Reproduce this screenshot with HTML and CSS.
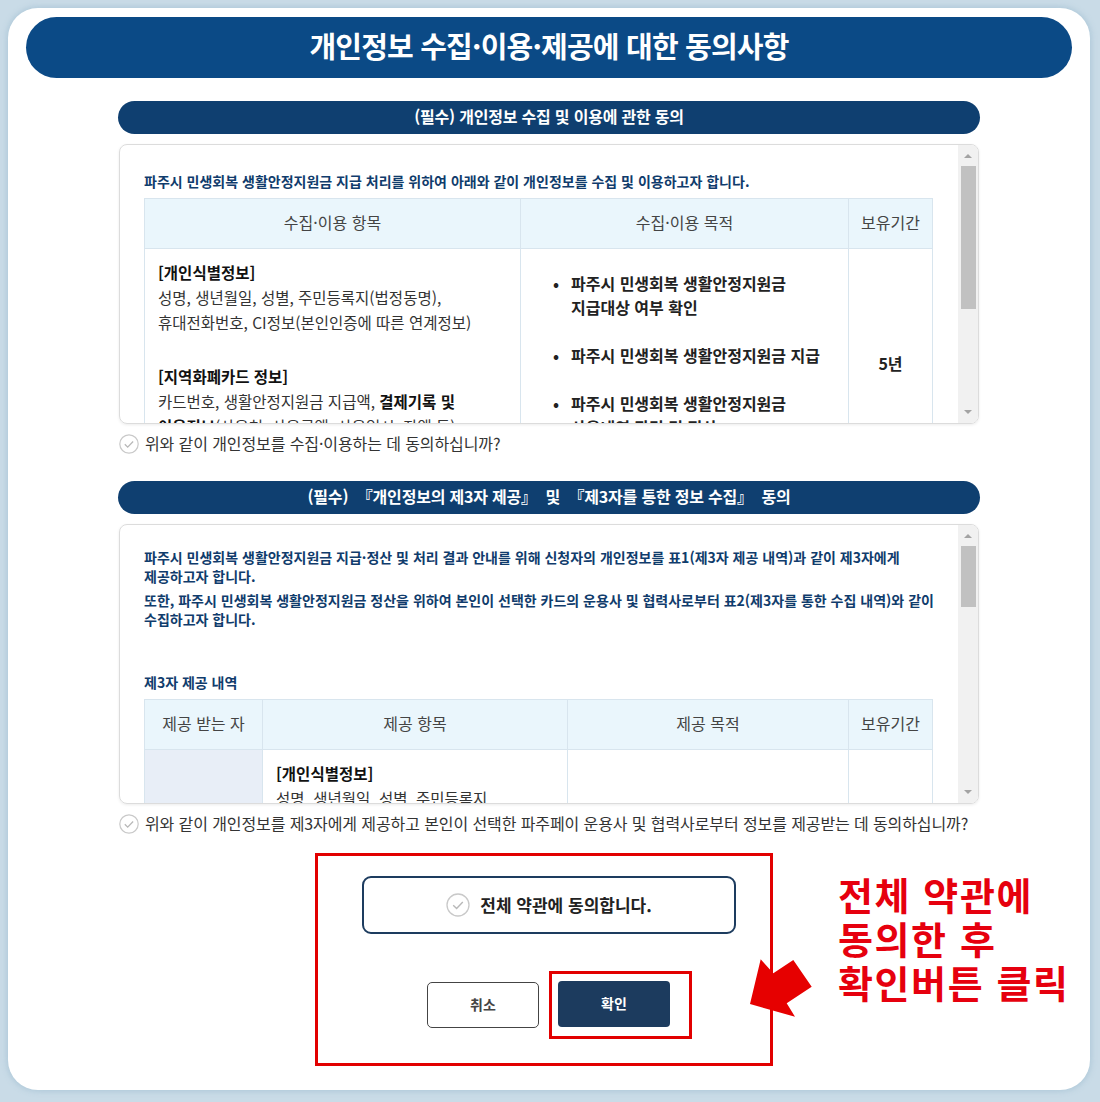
FILE: index.html
```html
<!DOCTYPE html>
<html lang="ko">
<head>
<meta charset="utf-8">
<title>개인정보 수집·이용·제공에 대한 동의사항</title>
<link rel="stylesheet" href="styles.css">
</head>
<body>
<div class="panel">
  <div class="title">개인정보 수집·이용·제공에 대한 동의사항</div>
  <div class="content">
    <div class="sec-head">(필수) 개인정보 수집 및 이용에 관한 동의</div>
    <div class="scrollbox">
      <div class="sb-content sb1">
        <p class="intro">파주시 민생회복 생활안정지원금 지급 처리를 위하여 아래와 같이 개인정보를 수집 및 이용하고자 합니다.</p>
        <table class="tbl">
          <colgroup><col class="c376"><col class="c328"><col class="c84"></colgroup>
          <tr><th>수집·이용 항목</th><th>수집·이용 목적</th><th>보유기간</th></tr>
          <tr>
            <td class="items">
              <div class="blk"><b>[개인식별정보]</b><br>성명, 생년월일, 성별, 주민등록지(법정동명),<br>휴대전화번호, CI정보(본인인증에 따른 연계정보)</div>
              <div class="blk gap"><b>[지역화폐카드 정보]</b><br>카드번호, 생활안정지원금 지급액, <b>결제기록 및</b><br><b>이용정보</b>(사용처, 사용금액, 사용일시, 잔액 등)</div>
            </td>
            <td class="purpose">
              <ul>
                <li>파주시 민생회복 생활안정지원금<br>지급대상 여부 확인</li>
                <li>파주시 민생회복 생활안정지원금 지급</li>
                <li>파주시 민생회복 생활안정지원금<br>사용내역 관리 및 정산</li>
              </ul>
            </td>
            <td class="period">5년</td>
          </tr>
        </table>
      </div>
      <div class="sb-bar">
        <span class="arr up"></span>
        <span class="thumb t1"></span>
        <span class="arr down"></span>
      </div>
    </div>
    <div class="agree">
      <svg class="chk" width="20" height="20" viewBox="0 0 20 20"><circle cx="10" cy="10" r="9.2" fill="#fff" stroke="#c9c9c9" stroke-width="1.2"/><path d="M5.8 10.3l2.9 2.8 5.4-5.6" fill="none" stroke="#b8b8b8" stroke-width="1.3"/></svg>
      <span>위와 같이 개인정보를 수집·이용하는 데 동의하십니까?</span>
    </div>

    <div class="sec-head second">(필수) &nbsp;『개인정보의 제3자 제공』 &nbsp;및 &nbsp;『제3자를 통한 정보 수집』 &nbsp;동의</div>
    <div class="scrollbox">
      <div class="sb-content sb2">
        <p class="intro">파주시 민생회복 생활안정지원금 지급·정산 및 처리 결과 안내를 위해 신청자의 개인정보를 표1(제3자 제공 내역)과 같이 제3자에게<br>제공하고자 합니다.</p>
        <p class="intro p2">또한, 파주시 민생회복 생활안정지원금 정산을 위하여 본인이 선택한 카드의 운용사 및 협력사로부터 표2(제3자를 통한 수집 내역)와 같이<br>수집하고자 합니다.</p>
        <p class="intro subt">제3자 제공 내역</p>
        <table class="tbl">
          <colgroup><col class="c118"><col class="c305"><col class="c281"><col class="c84"></colgroup>
          <tr><th>제공 받는 자</th><th>제공 항목</th><th>제공 목적</th><th>보유기간</th></tr>
          <tr>
            <td class="who">&nbsp;</td>
            <td class="items"><b>[개인식별정보]</b><br>성명, 생년월일, 성별, 주민등록지<br>(법정동명), 휴대전화번호</td>
            <td></td>
            <td></td>
          </tr>
        </table>
      </div>
      <div class="sb-bar">
        <span class="arr up"></span>
        <span class="thumb t2"></span>
        <span class="arr down"></span>
      </div>
    </div>
    <div class="agree">
      <svg class="chk" width="20" height="20" viewBox="0 0 20 20"><circle cx="10" cy="10" r="9.2" fill="#fff" stroke="#c9c9c9" stroke-width="1.2"/><path d="M5.8 10.3l2.9 2.8 5.4-5.6" fill="none" stroke="#b8b8b8" stroke-width="1.3"/></svg>
      <span>위와 같이 개인정보를 제3자에게 제공하고 본인이 선택한 파주페이 운용사 및 협력사로부터 정보를 제공받는 데 동의하십니까?</span>
    </div>

    <div class="redbox">
      <div class="agree-all">
        <svg width="24" height="24" viewBox="0 0 24 24"><circle cx="12" cy="12" r="11" fill="#fff" stroke="#c9c9c9" stroke-width="1.3"/><path d="M7.2 12.3l3.4 3.3 6.2-6.5" fill="none" stroke="#b8b8b8" stroke-width="1.4"/></svg>
        <span>전체 약관에 동의합니다.</span>
      </div>
      <div class="btns">
        <div class="btn-cancel">취소</div>
        <div class="hl"><div class="btn-ok">확인</div></div>
      </div>
    </div>
  </div>

  <div class="note">전체 약관에<br>동의한 후<br>확인버튼 클릭</div>
  <svg class="arrow" width="90" height="90" viewBox="0 0 90 90"><polygon points="10,64 20.7,19.3 33.3,33.3 53.3,20 71.7,46.7 46.7,63.3 55,76.7" fill="#e60000"/></svg>
</div>
</body>
</html>
```

FILE: styles.css
```css
html, body {
  margin: 0;
  padding: 0;
}
body {
  background: #c9dbe7;
  font-family: "Noto Sans CJK KR", "Noto Sans", sans-serif;
  width: 1100px;
  height: 1102px;
  overflow: hidden;
  padding-top: 8px;
  box-sizing: border-box;
}
.panel {
  position: relative;
  margin: 0 10px 0 8px;
  height: 1082px;
  box-sizing: border-box;
  background: #fff;
  border-radius: 30px;
  padding: 9px 18px 0;
  box-shadow: 0 0 5px 2px rgba(170, 196, 214, 0.7);
}
.title {
  height: 61px;
  box-sizing: border-box;
  padding-bottom: 5px;
  border-radius: 31px;
  background: #0b4a86;
  color: #fff;
  font-size: 29px;
  font-weight: 700;
  letter-spacing: -0.8px;
  display: flex;
  align-items: center;
  justify-content: center;
}
.content {
  width: 862px;
  margin: 0 auto;
}
.sec-head {
  height: 33px;
  box-sizing: border-box;
  padding-bottom: 3px;
  border-radius: 17px;
  background: #0f3f70;
  color: #fff;
  font-weight: 700;
  font-size: 16px;
  letter-spacing: -0.2px;
  display: flex;
  align-items: center;
  justify-content: center;
  margin-top: 23px;
  margin-bottom: 10px;
}
.sec-head.second {
  margin-top: 26px;
}
.scrollbox {
  display: flex;
  height: 280px;
  margin: 0 1px;
  box-sizing: border-box;
  border: 1px solid #dcdcdc;
  border-radius: 8px;
  overflow: hidden;
  box-shadow: 0 1px 3px rgba(0, 0, 0, 0.08);
}
.sb-content {
  flex: 1;
  overflow: hidden;
  padding-left: 24px;
}
.sb1 { padding-top: 27px; }
.sb2 { padding-top: 23px; }
.sb-bar {
  width: 20px;
  background: #f1f1f1;
  display: flex;
  flex-direction: column;
  align-items: center;
}
.arr {
  width: 0;
  height: 0;
  border-left: 4px solid transparent;
  border-right: 4px solid transparent;
}
.arr.up {
  border-bottom: 4px solid #a3a3a3;
  margin-top: 9px;
}
.arr.down {
  border-top: 4px solid #a3a3a3;
  margin-top: auto;
  margin-bottom: 9px;
}
.thumb {
  width: 15px;
  background: #c1c1c1;
  margin-top: 8px;
}
.t1 { height: 143px; }
.t2 { height: 61px; }

.intro {
  margin: 0;
  font-size: 14px;
  font-weight: 700;
  line-height: 19px;
  letter-spacing: 0;
  color: #103c6c;
}
.intro.p2 { margin-top: 5px; }
.intro.subt { margin-top: 44px; }

.tbl {
  border-collapse: collapse;
  table-layout: fixed;
  width: 788px;
  margin-top: 7px;
  font-size: 15.5px;
  letter-spacing: 0;
  color: #333;
}
.c376 { width: 376px; }
.c328 { width: 328px; }
.c84 { width: 84px; }
.c118 { width: 118px; }
.c305 { width: 305px; }
.c281 { width: 281px; }
.tbl th,
.tbl td {
  border: 1px solid #d8e5ee;
}
.tbl th {
  height: 46px;
  padding: 0 0 3px;
  background: #eaf6fc;
  font-weight: 400;
  font-size: 16px;
  color: #444;
}
.tbl td {
  vertical-align: top;
  padding: 0;
}
.tbl b {
  color: #111;
}
.items {
  padding: 11px 13px 0 !important;
  line-height: 25px;
}
.blk.gap { margin-top: 29px; }
.purpose ul {
  list-style: none;
  margin: 0;
  padding: 22px 0 0 32px;
}
.purpose li {
  position: relative;
  padding-left: 18px;
  font-weight: 700;
  font-size: 16px;
  line-height: 24px;
  margin-bottom: 24px;
  color: #222;
}
.purpose li::before {
  content: "•";
  position: absolute;
  left: 0;
  top: 0;
}
.period {
  text-align: center;
  font-weight: 700;
  font-size: 16px;
  color: #222;
  padding-top: 102px !important;
  line-height: 25px;
}
.who {
  background: #e8eef7;
  height: 120px;
}

.agree {
  display: flex;
  align-items: center;
  gap: 6px;
  height: 22px;
  margin: 9px 0 0 1px;
  font-size: 16px;
  color: #333;
  letter-spacing: -0.1px;
}
.agree span {
  margin-top: -2px;
}
.chk { flex: none; }

.redbox {
  margin: 18px 0 0 197px;
  width: 458px;
  height: 213px;
  box-sizing: border-box;
  border: 3px solid #e20000;
  padding-top: 20px;
}
.agree-all {
  margin-left: 44px;
  width: 374px;
  height: 58px;
  box-sizing: border-box;
  border: 2px solid #1d3c5f;
  border-radius: 9px;
  display: flex;
  align-items: center;
  justify-content: center;
  gap: 10px;
  font-size: 17px;
  font-weight: 700;
  color: #222;
}
.agree-all span {
  margin-top: -2px;
}
.btns {
  display: flex;
  align-items: center;
  gap: 10px;
  margin: 37px 0 0 109px;
}
.btn-cancel,
.btn-ok {
  width: 112px;
  height: 46px;
  box-sizing: border-box;
  padding-bottom: 3px;
  display: flex;
  align-items: center;
  justify-content: center;
  font-size: 14px;
  font-weight: 700;
}
.btn-cancel {
  border: 1px solid #444;
  border-radius: 5px;
  background: #fff;
  color: #444;
}
.hl {
  border: 3px solid #e20000;
  padding: 7px 19px 9px 6px;
}
.btn-ok {
  background: #1c3b5e;
  border-radius: 4px;
  color: #fff;
}

.note {
  position: absolute;
  left: 830px;
  top: 864px;
  font-size: 38px;
  font-weight: 700;
  line-height: 44px;
  color: #e6000e;
  letter-spacing: 1.6px;
}
.arrow {
  position: absolute;
  left: 732px;
  top: 932px;
}
```
